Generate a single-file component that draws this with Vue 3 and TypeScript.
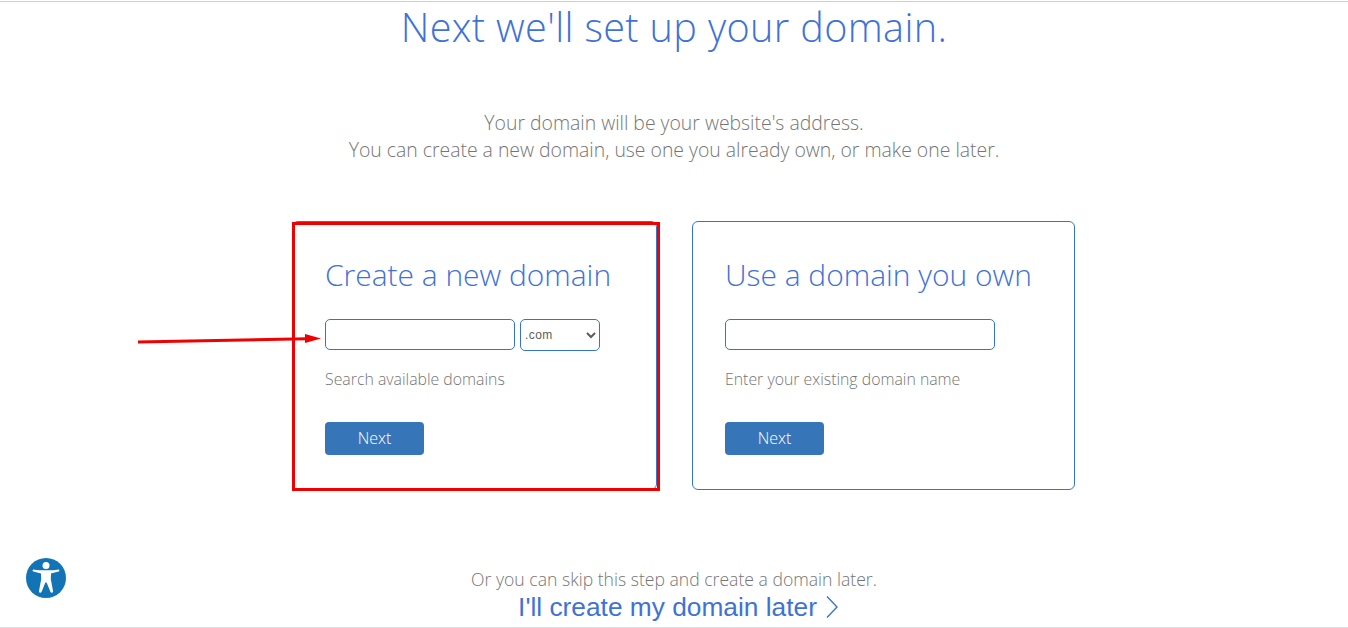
<template>
  <div class="page">
    <h1 class="title">Next we'll set up your domain.</h1>
    <p class="intro">
      Your domain will be your website's address.<br>
      You can create a new domain, use one you already own, or make one later.
    </p>

    <div class="cards">
      <section class="card card-new">
        <h2>Create a new domain</h2>
        <div class="field-row">
          <input class="domain-input" type="text">
          <select class="tld">
            <option>.com</option>
            <option>.net</option>
            <option>.org</option>
          </select>
        </div>
        <p class="hint">Search available domains</p>
        <button class="next-btn">Next</button>
        <div class="highlight"></div>
      </section>

      <section class="card">
        <h2>Use a domain you own</h2>
        <div class="field-row">
          <input class="domain-input own" type="text">
        </div>
        <p class="hint">Enter your existing domain name</p>
        <button class="next-btn">Next</button>
      </section>
    </div>

    <div class="skip">
      <p>Or you can skip this step and create a domain later.</p>
      <a class="later" href="#">
        I'll create my domain later
        <svg width="12" height="24" viewBox="0 0 12 24">
          <path d="M1 1.5 L11 12 L1 22.5" fill="none" stroke="#3e72d6" stroke-width="1.4" />
        </svg>
      </a>
    </div>

    <!-- red annotation arrow -->
    <svg class="arrow" width="190" height="20" viewBox="0 0 190 20">
      <path d="M1 10 L170 6.8" stroke="#f00000" stroke-width="3" fill="none" />
      <path d="M168 2 L184 6.6 L168 11 Z" fill="#f00000" />
    </svg>

    <button class="a11y" aria-label="Accessibility">
      <svg width="40" height="40" viewBox="0 0 40 40">
        <circle cx="20" cy="20" r="20" fill="#1273b5" />
        <circle cx="20" cy="7.5" r="3.5" fill="#fff" />
        <path
          d="M7.8 11.4 C14 12.6 26 12.6 32.2 11.4 C33.6 11.2 33.8 13.2 32.6 13.5 L25 15.4 L24.8 21 L27 33 C27.3 35 25 35.4 24.4 33.8 L20.8 25 C20.5 24.4 19.5 24.4 19.2 25 L15.6 33.8 C15 35.4 12.7 35 13 33 L15.2 21 L15 15.4 L7.4 13.5 C6.2 13.2 6.4 11.2 7.8 11.4 Z"
          fill="#fff"
        />
      </svg>
    </button>
  </div>
</template>

<script setup lang="ts">
</script>

<style>
html,
body {
  margin: 0;
  background: #fff;
}
</style>

<style scoped>
.page {
  position: relative;
  box-sizing: border-box;
  height: 627px;
  margin-top: 1px;
  border-top: 1px solid #cfcfcf;
  border-bottom: 1px solid #d9dee3;
  overflow: hidden;
  font-family: "Open Sans", "Liberation Sans", sans-serif;
  font-weight: 300;
  display: flex;
  flex-direction: column;
  align-items: center;
}

.title {
  margin: 0;
  font-size: 39.6px;
  letter-spacing: 0.37px;
  line-height: 50px;
  font-weight: 300;
  color: #3e72d6;
}

.intro {
  margin: 57px 0 0;
  font-size: 19.4px;
  line-height: 27px;
  text-align: center;
  color: #757575;
}

.cards {
  display: flex;
  gap: 35px;
  margin: 58px 0 0 19px;
}

.card {
  box-sizing: border-box;
  width: 383px;
  height: 269px;
  padding: 31px 32px 0;
  border: 1px solid #3675c4;
  border-radius: 6px;
}

.card-new {
  position: relative;
  width: 365px;
}

.card h2 {
  margin: 0;
  font-size: 29.95px;
  line-height: 44px;
  font-weight: 300;
  color: #3e72d6;
}

.field-row {
  display: flex;
  align-items: flex-start;
  gap: 5px;
  height: 31px;
  margin-top: 22px;
}

.domain-input {
  box-sizing: border-box;
  width: 190px;
  height: 31px;
  padding: 0 8px;
  border: 1px solid #3675c4;
  border-radius: 5px;
  background: #fff;
}

.domain-input.own {
  width: 270px;
}

.tld {
  box-sizing: border-box;
  width: 80px;
  height: 32px;
  padding: 0;
  border: 1px solid #3675c4;
  border-radius: 5px;
  background: #fff;
  color: #5c5c5c;
  font-family: "Liberation Sans", Arial, sans-serif;
  font-size: 12px;
  letter-spacing: 0.4px;
}

.hint {
  margin: 17px 0 0;
  font-size: 15.85px;
  line-height: 24px;
  color: #757575;
}

.next-btn {
  display: block;
  width: 99px;
  height: 33px;
  margin-top: 31px;
  padding: 0 0 2px;
  border: none;
  border-radius: 4px;
  background: #3775b9;
  color: #fff;
  font-family: inherit;
  font-weight: 300;
  font-size: 16px;
}

/* red box drawn over the first card */
.highlight {
  position: absolute;
  left: -1px;
  top: 0;
  right: -4px;
  bottom: -2px;
  border: 3px solid #f00000;
  pointer-events: none;
}

.skip {
  margin-top: 77px;
  text-align: center;
}

.skip p {
  margin: 0;
  font-size: 17.6px;
  line-height: 24px;
  color: #757575;
}

.later {
  display: inline-flex;
  align-items: center;
  gap: 9px;
  margin: 1px 0 0 8px;
  font-family: "Liberation Sans", Arial, sans-serif;
  font-weight: 400;
  font-size: 26.3px;
  line-height: 30px;
  color: #3e72d6;
  text-decoration: none;
}

.arrow {
  position: absolute;
  left: 137px;
  top: 330px;
}

.a11y {
  position: absolute;
  left: 26px;
  top: 556px;
  width: 40px;
  height: 40px;
  padding: 0;
  border: none;
  background: none;
}
</style>
